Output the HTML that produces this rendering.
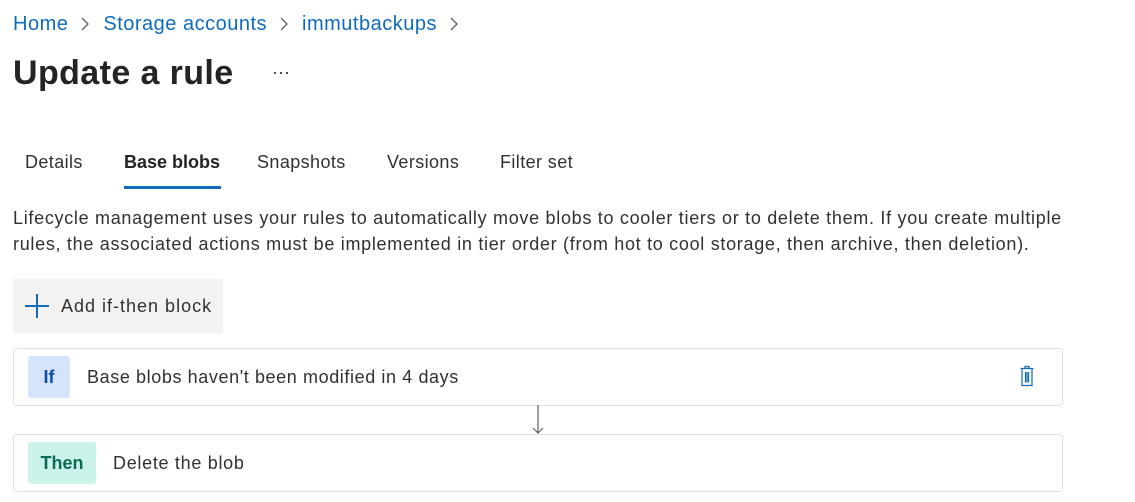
<!DOCTYPE html>
<html><head><style>
body{margin:0;width:1135px;height:502px;background:#fff;font-family:"Liberation Sans",sans-serif;color:#323130;position:relative;overflow:hidden}
.a{position:absolute;white-space:nowrap}
.bc{top:13px;left:13px;font-size:20px;color:#0f6cbd;letter-spacing:0.5px}
.bc svg{margin:0 14px 0 13px;vertical-align:-1px}
.title{top:54px;left:13px;font-size:34px;font-weight:600;color:#242424;letter-spacing:0.4px}
.tab{top:152px;font-size:18px;color:#323130;letter-spacing:0.4px}
.p{left:13px;font-size:18px;color:#323130;letter-spacing:0.7px}
.btn{left:13px;top:279px;width:210px;height:54px;background:#f3f2f1}
.card{left:13px;width:1048px;border:1px solid #e0e0e0;border-radius:4px;background:#fff}
.badge{border-radius:3px;font-size:18px;font-weight:600;text-align:center;line-height:42px;height:42px}
</style></head><body>
<div class="a bc">Home<svg width="8" height="14"><path d="M1 1L7 7L1 13" stroke="#605e5c" stroke-width="1.3" fill="none"/></svg>Storage accounts<svg width="8" height="14"><path d="M1 1L7 7L1 13" stroke="#605e5c" stroke-width="1.3" fill="none"/></svg>immutbackups<svg width="8" height="14"><path d="M1 1L7 7L1 13" stroke="#605e5c" stroke-width="1.3" fill="none"/></svg></div>
<div class="a title">Update a rule</div>
<div class="a" style="top:62px;left:272px;font-size:18px;color:#323130">···</div>
<div class="a tab" style="left:25px">Details</div>
<div class="a tab" style="left:124px;font-weight:600;color:#242424;letter-spacing:0">Base blobs</div>
<div class="a" style="left:124px;top:186px;width:97px;height:3px;background:#0f6cbd"></div>
<div class="a tab" style="left:257px">Snapshots</div>
<div class="a tab" style="left:387px">Versions</div>
<div class="a tab" style="left:500px">Filter set</div>
<div class="a p" style="top:208px">Lifecycle management uses your rules to automatically move blobs to cooler tiers or to delete them. If you create multiple</div>
<div class="a p" style="top:234px">rules, the associated actions must be implemented in tier order (from hot to cool storage, then archive, then deletion).</div>
<div class="a btn">
<svg class="a" style="left:12px;top:15px" width="24" height="24"><path d="M12 0V24M0 12H24" stroke="#0f6cbd" stroke-width="2"/></svg>
<div class="a" style="left:48px;top:17px;font-size:18px;color:#323130;letter-spacing:1px">Add if-then block</div></div>
<div class="a card" style="top:348px;height:56px">
<div class="a badge" style="left:14px;top:7px;width:42px;background:#d6e3fd;color:#0f4ea3">If</div>
<div class="a" style="left:73px;top:18px;font-size:18px;letter-spacing:0.6px">Base blobs haven't been modified in 4 days</div>
<svg class="a" style="left:1004px;top:16px" width="18" height="22" viewBox="0 0 18 22"><path d="M7 3V1.5H11V3M2.5 3.5H15.5M4 3.5V20.5H14V3.5M7.5 7V17.5M9 7V17.5M10.5 7V17.5" stroke="#0f6cbd" stroke-width="1.2" fill="none"/></svg>
</div>
<svg class="a" style="left:532px;top:405px" width="12" height="30"><path d="M6 0V28M1 23L6 28L11 23" stroke="#605e5c" stroke-width="1.2" fill="none"/></svg>
<div class="a card" style="top:434px;height:56px">
<div class="a badge" style="left:14px;top:7px;width:68px;background:#ccf2ec;color:#0c6b55">Then</div>
<div class="a" style="left:99px;top:18px;font-size:18px;letter-spacing:0.7px">Delete the blob</div>
</div>
</body></html>
